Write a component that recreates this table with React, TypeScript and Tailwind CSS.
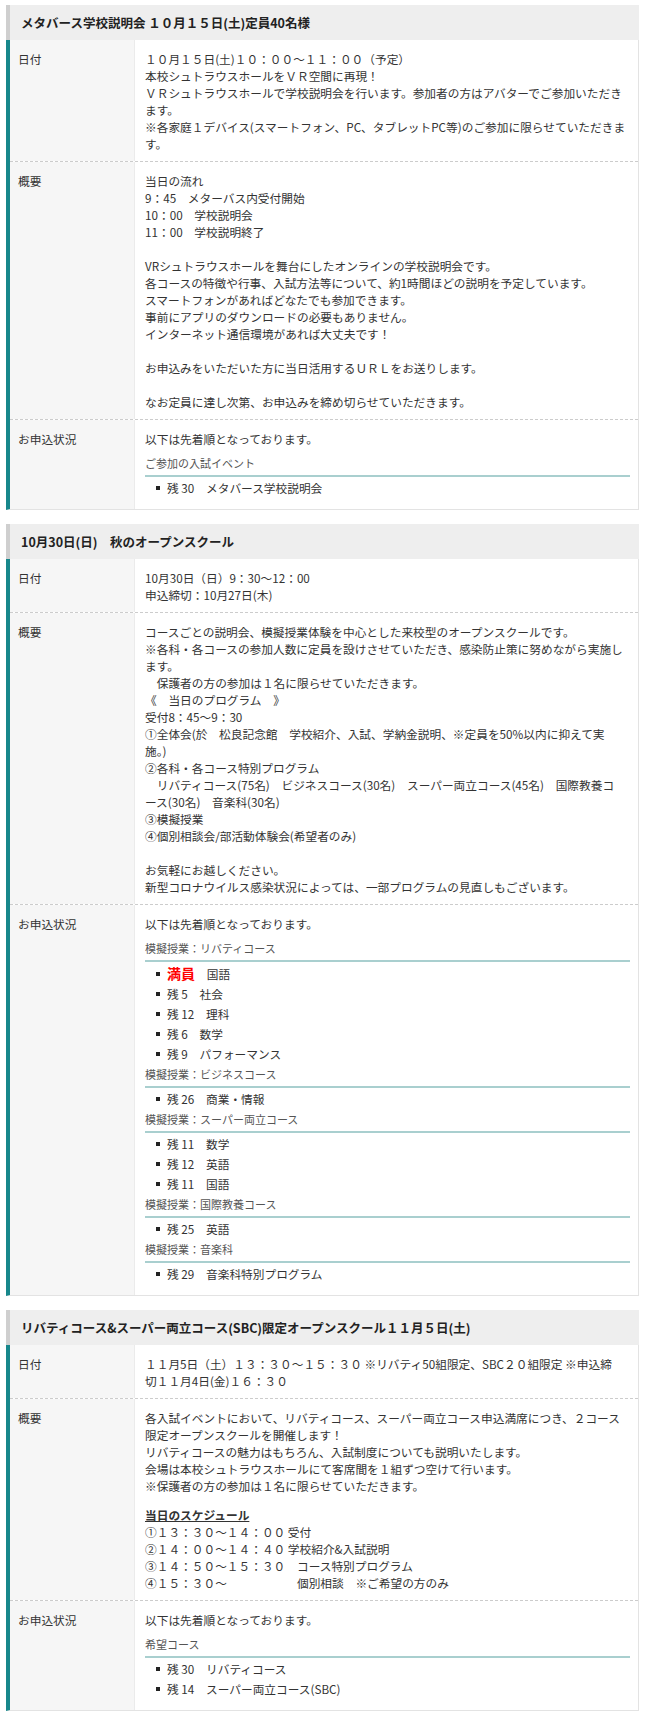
import type { ReactNode } from 'react';
import clsx from 'clsx';

function Section({ title, children }: { title: string; children: ReactNode }) {
  return (
    <section className="mb-[14px]">
      <h2 className="border-l-4 border-[#cfcfcf] bg-[#eeeeee] px-[11px] py-[9px] text-[12.5px] font-bold leading-[17px] text-[#222]">
        {title}
      </h2>
      <div className="border-r border-b border-l-4 border-r-[#e3e3e3] border-b-[#e3e3e3] border-l-[#17878b]">{children}</div>
    </section>
  );
}

function Row({ label, first, children }: { label: string; first?: boolean; children: ReactNode }) {
  return (
    <div className={clsx('grid grid-cols-[125px_1fr]', !first && 'border-t border-dashed border-[#cccccc]')}>
      <div className="border-r border-[#ebebeb] bg-[#f6f6f6] px-2 pt-[10px] pb-[9px] leading-[17px]">{label}</div>
      <div className="pt-[10px] pr-[8px] pb-[9px] pl-[10px] leading-[17px]">{children}</div>
    </div>
  );
}

function Lines({ lines }: { lines: string[] }) {
  return (
    <div>
      {lines.map((line, i) => (
        <div key={i} className="whitespace-nowrap">
          {line || '\u00a0'}
        </div>
      ))}
    </div>
  );
}

function Sub({ title }: { title: string }) {
  return (
    <div className="border-b-2 border-[#a9cfcf] pb-[4px] text-[11px] leading-[16px] text-[#555]">{title}</div>
  );
}

type Item = { rest?: string; full?: boolean; name: string };

function Items({ items }: { items: Item[] }) {
  return (
    <ul className="pt-[1px] pb-[2px] pl-[11px]">
      {items.map((it, i) => (
        <li key={i} className="flex items-center gap-[7px] leading-[20px]">
          <span className="h-[4px] w-[4px] bg-[#222]" />
          {it.full ? (
            <span>
              <span className="text-[14px] font-bold text-[#ff0000]">満員</span>
              <span>　{it.name}</span>
            </span>
          ) : (
            <span>
              残 {it.rest}　{it.name}
            </span>
          )}
        </li>
      ))}
    </ul>
  );
}

function Intro() {
  return <p className="mb-[8px]">以下は先着順となっております。</p>;
}

export default function App() {
  return (
    <div className="min-h-[1716px] bg-white px-[6px] pt-[5px] font-['Noto_Sans_CJK_JP',sans-serif] text-[11.7px] text-[#333]">
      <Section title="メタバース学校説明会 １０月１５日(土)定員40名様">
        <Row label="日付" first>
          <Lines
            lines={[
              '１０月１５日(土)１０：００～１１：００（予定）',
              '本校シュトラウスホールをＶＲ空間に再現！',
              'ＶＲシュトラウスホールで学校説明会を行います。参加者の方はアバターでご参加いただき',
              'ます。',
              '※各家庭１デバイス(スマートフォン、PC、タブレットPC等)のご参加に限らせていただきま',
              'す。',
            ]}
          />
        </Row>
        <Row label="概要">
          <Lines
            lines={[
              '当日の流れ',
              '9：45　メターバス内受付開始',
              '10：00　学校説明会',
              '11：00　学校説明終了',
              '',
              'VRシュトラウスホールを舞台にしたオンラインの学校説明会です。',
              '各コースの特徴や行事、入試方法等について、約1時間ほどの説明を予定しています。',
              'スマートフォンがあればどなたでも参加できます。',
              '事前にアプリのダウンロードの必要もありません。',
              'インターネット通信環境があれば大丈夫です！',
              '',
              'お申込みをいただいた方に当日活用するＵＲＬをお送りします。',
              '',
              'なお定員に達し次第、お申込みを締め切らせていただきます。',
            ]}
          />
        </Row>
        <Row label="お申込状況">
          <Intro />
          <Sub title="ご参加の入試イベント" />
          <Items items={[{ rest: '30', name: 'メタバース学校説明会' }]} />
        </Row>
      </Section>

      <Section title="10月30日(日)　秋のオープンスクール">
        <Row label="日付" first>
          <Lines lines={['10月30日（日）9：30～12：00', '申込締切：10月27日(木)']} />
        </Row>
        <Row label="概要">
          <Lines
            lines={[
              'コースごとの説明会、模擬授業体験を中心とした来校型のオープンスクールです。',
              '※各科・各コースの参加人数に定員を設けさせていただき、感染防止策に努めながら実施し',
              'ます。',
              '　保護者の方の参加は１名に限らせていただきます。',
              '《　当日のプログラム　》',
              '受付8：45～9：30',
              '①全体会(於　松良記念館　学校紹介、入試、学納金説明、※定員を50%以内に抑えて実',
              '施。)',
              '②各科・各コース特別プログラム',
              '　リバティコース(75名)　ビジネスコース(30名)　スーパー両立コース(45名)　国際教養コ',
              'ース(30名)　音楽科(30名)',
              '③模擬授業',
              '④個別相談会/部活動体験会(希望者のみ)',
              '',
              'お気軽にお越しください。',
              '新型コロナウイルス感染状況によっては、一部プログラムの見直しもございます。',
            ]}
          />
        </Row>
        <Row label="お申込状況">
          <Intro />
          <Sub title="模擬授業：リバティコース" />
          <Items
            items={[
              { full: true, name: '国語' },
              { rest: '5', name: '社会' },
              { rest: '12', name: '理科' },
              { rest: '6', name: '数学' },
              { rest: '9', name: 'パフォーマンス' },
            ]}
          />
          <Sub title="模擬授業：ビジネスコース" />
          <Items items={[{ rest: '26', name: '商業・情報' }]} />
          <Sub title="模擬授業：スーパー両立コース" />
          <Items
            items={[
              { rest: '11', name: '数学' },
              { rest: '12', name: '英語' },
              { rest: '11', name: '国語' },
            ]}
          />
          <Sub title="模擬授業：国際教養コース" />
          <Items items={[{ rest: '25', name: '英語' }]} />
          <Sub title="模擬授業：音楽科" />
          <Items items={[{ rest: '29', name: '音楽科特別プログラム' }]} />
        </Row>
      </Section>

      <Section title="リバティコース&スーパー両立コース(SBC)限定オープンスクール１１月５日(土)">
        <Row label="日付" first>
          <Lines
            lines={[
              '１１月5日（土）１３：３０～１５：３０ ※リバティ50組限定、SBC２０組限定 ※申込締',
              '切１１月4日(金)１６：３０',
            ]}
          />
        </Row>
        <Row label="概要">
          <Lines
            lines={[
              '各入試イベントにおいて、リバティコース、スーパー両立コース申込満席につき、２コース',
              '限定オープンスクールを開催します！',
              'リバティコースの魅力はもちろん、入試制度についても説明いたします。',
              '会場は本校シュトラウスホールにて客席間を１組ずつ空けて行います。',
              '※保護者の方の参加は１名に限らせていただきます。',
            ]}
          />
          <div className="mt-[12px] font-bold underline">当日のスケジュール</div>
          <Lines
            lines={[
              '①１３：３０～１４：００ 受付',
              '②１４：００～１４：４０ 学校紹介&入試説明',
              '③１４：５０～１５：３０　コース特別プログラム',
              '④１５：３０～　　　　　　個別相談　※ご希望の方のみ',
            ]}
          />
        </Row>
        <Row label="お申込状況">
          <Intro />
          <Sub title="希望コース" />
          <Items
            items={[
              { rest: '30', name: 'リバティコース' },
              { rest: '14', name: 'スーパー両立コース(SBC)' },
            ]}
          />
        </Row>
      </Section>
    </div>
  );
}
